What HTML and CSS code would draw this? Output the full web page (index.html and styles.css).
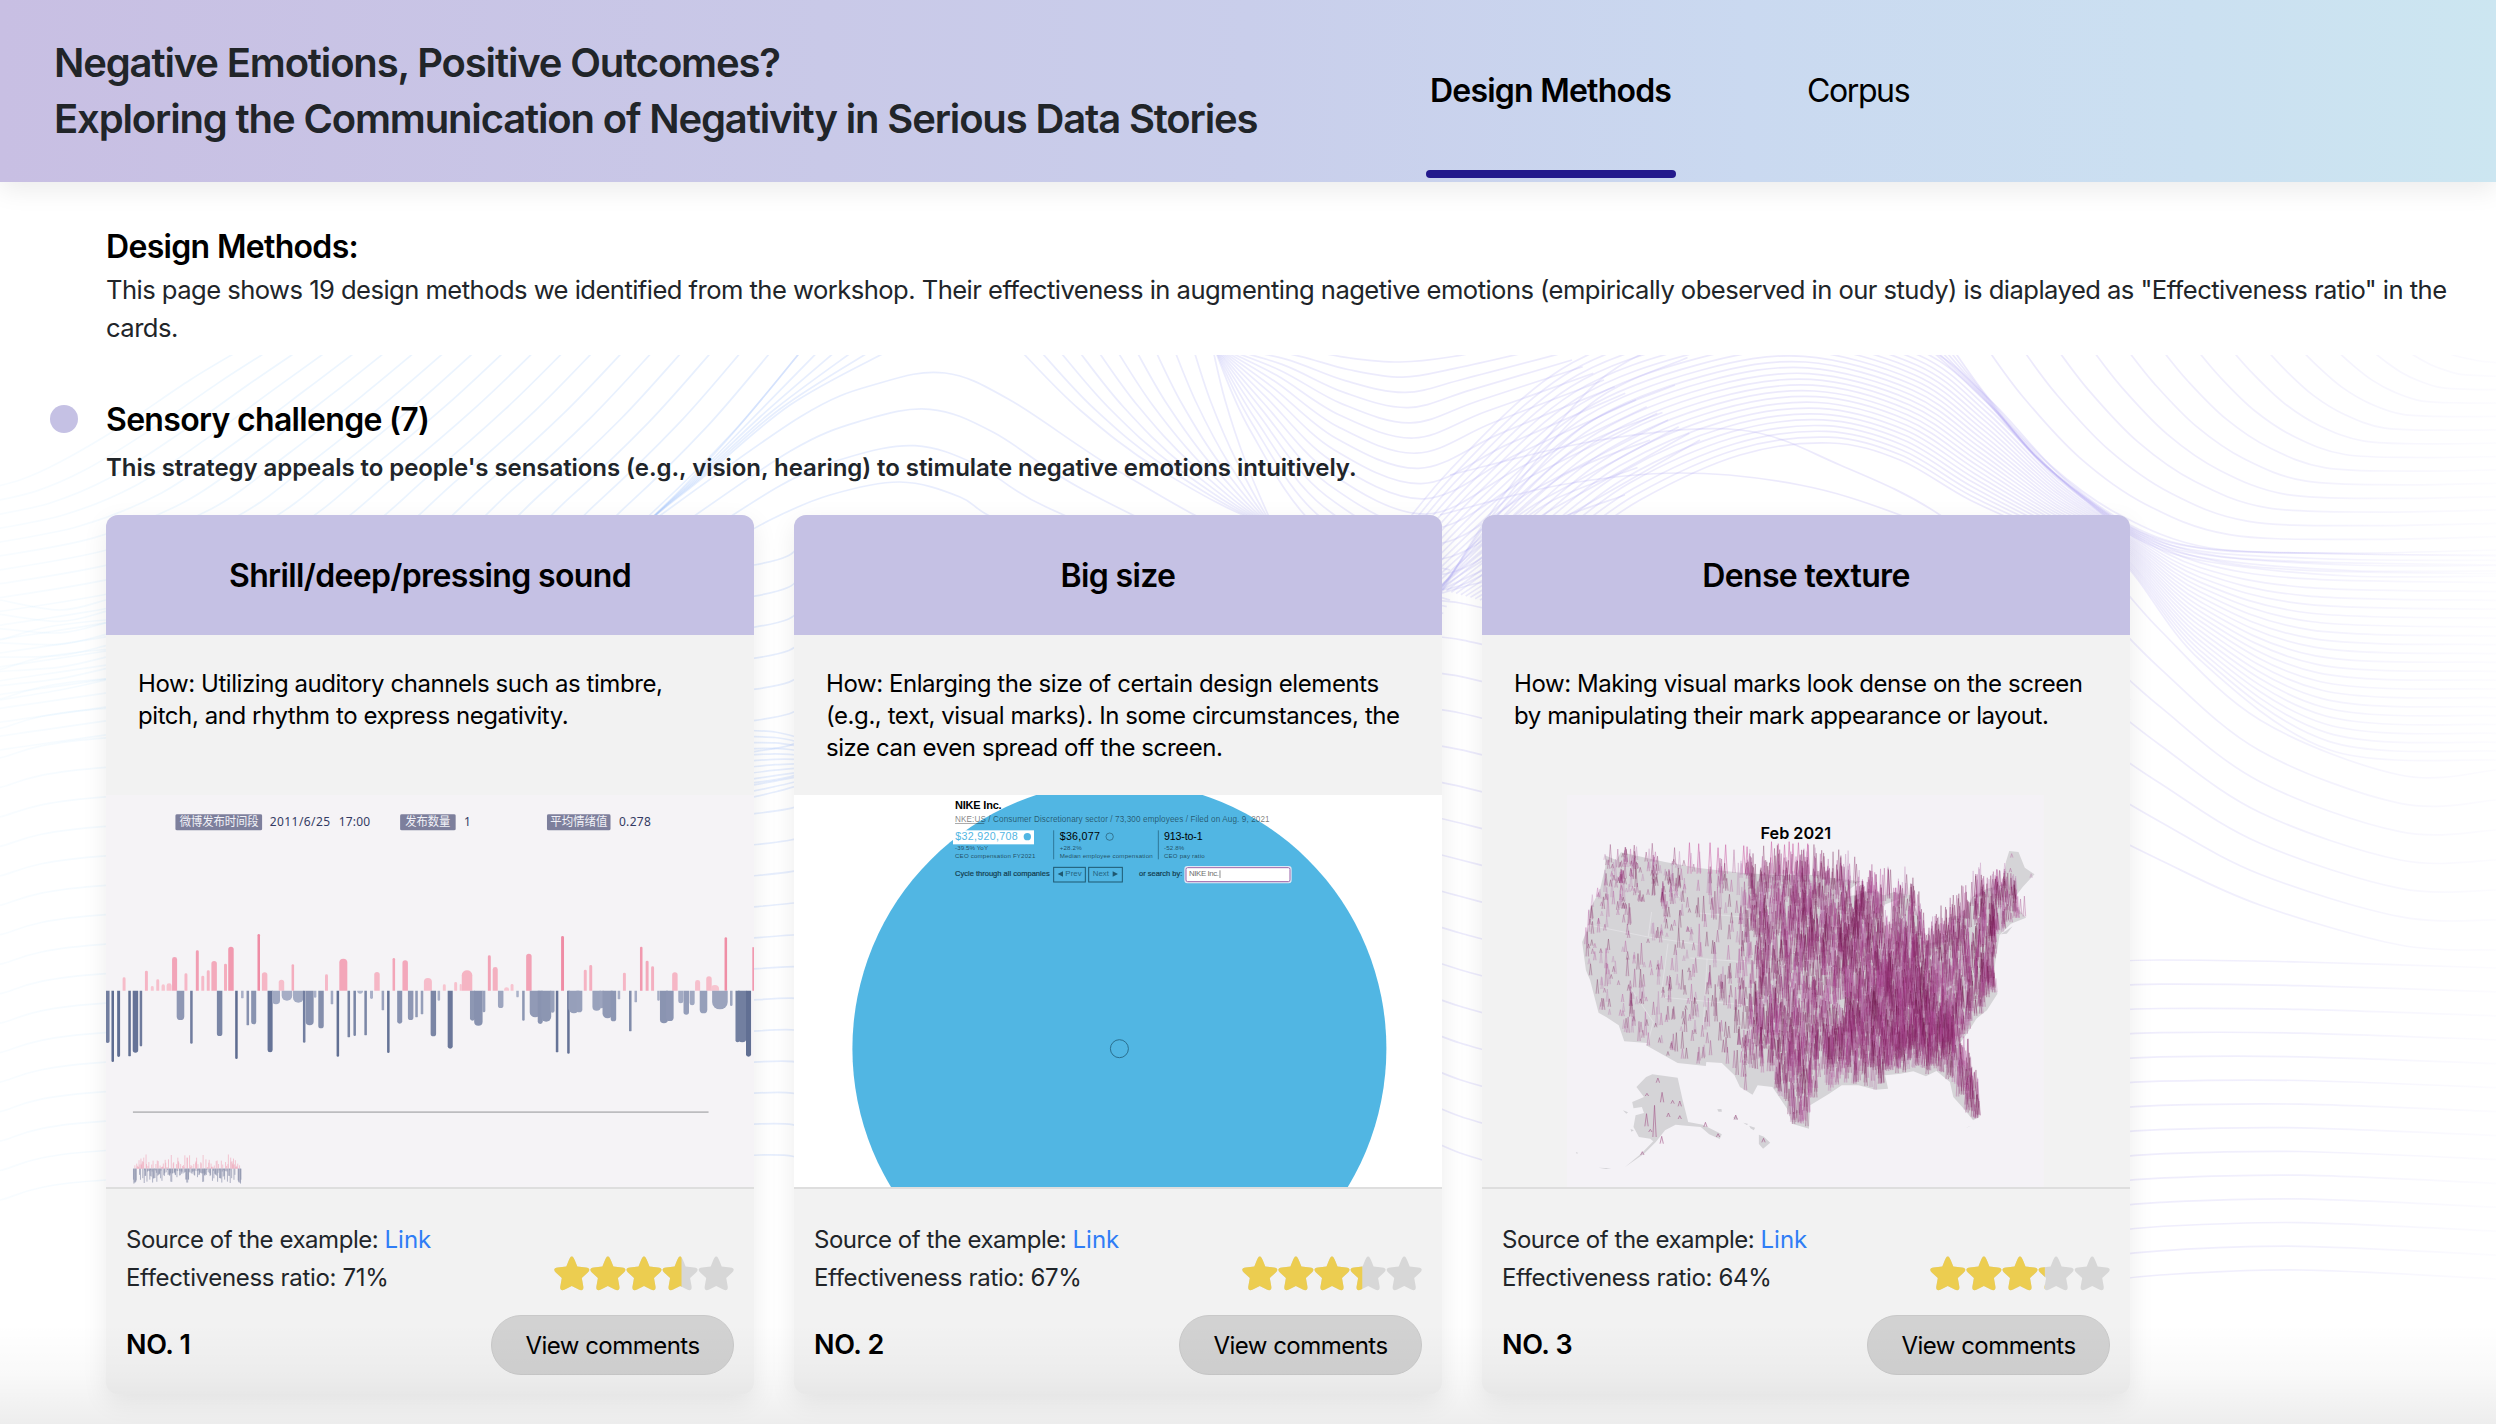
FILE: index.html
```html
<!DOCTYPE html>
<html lang="en">
<head>
<meta charset="utf-8">
<title>Negative Emotions, Positive Outcomes?</title>
<link rel="stylesheet" href="styles.css">
</head>
<body>
<svg class="waves" viewBox="0 355 2496 1069" aria-hidden="true">
  <defs>
    <linearGradient id="waveInk" gradientUnits="userSpaceOnUse" x1="0" y1="0" x2="2496" y2="0">
      <stop offset="0" stop-color="#aadcfc" stop-opacity=".08"/>
      <stop offset=".1" stop-color="#a8d4fc" stop-opacity=".2"/>
      <stop offset=".3" stop-color="#a4c2fa" stop-opacity=".27"/>
      <stop offset=".5" stop-color="#b0aef4" stop-opacity=".24"/>
      <stop offset=".8" stop-color="#a99cf0" stop-opacity=".22"/>
      <stop offset=".92" stop-color="#b0a8f2" stop-opacity=".17"/>
      <stop offset="1" stop-color="#b8b0f4" stop-opacity=".04"/>
    </linearGradient>
  </defs>
  <g id="waves" fill="none" stroke="url(#waveInk)" stroke-width="1.7"></g>
</svg>

<header class="topbar">
  <h1 class="topbar-title">Negative Emotions, Positive Outcomes?<br>Exploring the Communication of Negativity in Serious Data Stories</h1>
  <nav class="tabs">
    <a class="tab tab-active">Design Methods</a>
    <a class="tab">Corpus</a>
  </nav>
</header>

<main class="content">
  <section class="intro">
    <h2 class="heading">Design Methods:</h2>
    <p class="intro-text">This page shows 19 design methods we identified from the workshop. Their effectiveness in augmenting nagetive emotions (empirically obeserved in our study) is diaplayed as "Effectiveness ratio" in the cards.</p>
  </section>

  <section class="strategy">
    <div class="strategy-head"><i class="dot"></i><h2 class="heading">Sensory challenge (7)</h2></div>
    <p class="strategy-text">This strategy appeals to people's sensations (e.g., vision, hearing) to stimulate negative emotions intuitively.</p>

    <div class="cards">
      <article class="card">
        <h3 class="card-title">Shrill/deep/pressing sound</h3>
        <p class="how">How: Utilizing auditory channels such as timbre,<br>pitch, and rhythm to express negativity.</p>
        <svg class="picture" viewBox="14 44 1540 1176" preserveAspectRatio="none">
          <rect x="14" y="44" width="1540" height="1176" fill="#f5f3f6"/>
          <g fill="#7d7f9c"><rect x="179" y="102" width="206" height="48" rx="4"/><rect x="713" y="102" width="132" height="48" rx="4"/><rect x="1062" y="102" width="151" height="48" rx="4"/></g>
          <g class="cjk" fill="#f2f2f8">
            <text transform="translate(189 136) scale(2.376 3)" textLength="79" lengthAdjust="spacingAndGlyphs">微博发布时间段</text>
            <text transform="translate(725 136) scale(2.376 3)" textLength="45" lengthAdjust="spacingAndGlyphs">发布数量</text>
            <text transform="translate(1070 136) scale(2.376 3)" textLength="57" lengthAdjust="spacingAndGlyphs">平均情绪值</text>
          </g>
          <g class="figures" fill="#333a63">
            <text transform="translate(403 136) scale(2.376 3)" textLength="60.5">2011/6/25</text>
            <text transform="translate(567 136) scale(2.376 3)" textLength="31.5">17:00</text>
            <text transform="translate(865 136) scale(2.376 3)">1</text>
            <text transform="translate(1233 136) scale(2.376 3)" textLength="32">0.278</text>
          </g>
          <g id="bars"></g>
          <path d="M78 995.5H1446" stroke="#bcbcbf" stroke-width="5"/>
          <g id="miniBars"></g>
        </svg>
        <div class="card-foot">
          <div class="facts">
            <p><span class="source">Source of the example: </span><a class="link">Link</a><br><span class="ratio">Effectiveness ratio: 71%</span></p>
            <div class="stars" data-score="71"></div>
          </div>
          <div class="actions"><strong class="rank">NO. 1</strong><button class="comments">View comments</button></div>
        </div>
      </article>

      <article class="card">
        <h3 class="card-title">Big size</h3>
        <p class="how">How: Enlarging the size of certain design elements<br>(e.g., text, visual marks). In some circumstances, the<br>size can even spread off the screen.</p>
        <svg class="picture" viewBox="0 0 648 392">
          <rect width="648" height="392" fill="#fff"/>
          <circle cx="325.4" cy="253.7" r="267" fill="#51b6e3"/>
          <circle cx="325.4" cy="253.7" r="9" fill="none" stroke="#2a6f8f" stroke-width="1"/>
          <g class="nike" transform="translate(136 -5) scale(.33333)">
            <text x="75" y="57" font-size="33" font-weight="700" textLength="140">NIKE Inc.</text>
            <g font-size="24.5" fill="#000" fill-opacity=".52"><text x="75" y="96" textLength="944">NKE:US / Consumer Discretionary sector / 73,300 employees / Filed on Aug. 9, 2021</text></g>
            <path d="M75 100.500H163" stroke="#000" stroke-opacity=".5" stroke-width="2"/>
            <rect x="69" y="121" width="243" height="42" fill="#fff"/>
            <text x="76" y="150" font-size="32" fill="#51b6e3" textLength="187">$32,920,708</text>
            <circle cx="292" cy="140" r="11" fill="#51b6e3"/>
            <text x="389" y="150" font-size="32" textLength="121">$36,077</text>
            <circle cx="539" cy="140" r="11" fill="none" stroke="#24566c" stroke-width="2"/>
            <text x="702" y="150" font-size="32" textLength="116">913-to-1</text>
            <path d="M371 121V208M685 121V208" stroke="#286a89" stroke-width="2.500"/>
            <g font-size="18.500" fill="#000" fill-opacity=".6">
              <text x="75" y="179" textLength="99">-39.5% YoY</text><text x="389" y="179" textLength="66">+28.2%</text><text x="702" y="179" textLength="61">-52.8%</text>
              <text x="75" y="203" textLength="241">CEO compensation FY2021</text><text x="389" y="203" textLength="279">Median employee compensation</text><text x="702" y="203" textLength="122">CEO pay ratio</text>
            </g>
            <g font-size="23.500" fill="#123c4e" stroke="#123c4e" stroke-width=".6">
              <text x="75" y="259" textLength="284" lengthAdjust="spacingAndGlyphs">Cycle through all companies</text><text x="627" y="259" textLength="130" lengthAdjust="spacingAndGlyphs">or search by:</text>
            </g>
            <g fill="none" stroke="#1f5870" stroke-width="3"><rect x="371" y="232" width="95" height="44"/><rect x="476" y="232" width="101" height="44"/></g>
            <path d="M399 244V260L383 252ZM548 244V260L564 252Z" fill="#1f5870"/>
            <g font-size="23.500" fill="#26657f"><text x="406" y="259" textLength="49">Prev</text><text x="488" y="259" textLength="49">Next</text></g>
            <rect x="765" y="230" width="318" height="48" rx="7" fill="#fff" stroke="#dfe6f4" stroke-width="4"/>
            <rect x="768" y="233" width="312" height="42" rx="5" fill="#fff" stroke="#9a62a8" stroke-width="3"/>
            <text x="777" y="259" font-size="23.500" fill="#6e6e6e" textLength="90">NIKE Inc.</text>
            <path d="M870 241V264" stroke="#555" stroke-width="2"/>
          </g>
        </svg>
        <div class="card-foot">
          <div class="facts">
            <p><span class="source">Source of the example: </span><a class="link">Link</a><br><span class="ratio">Effectiveness ratio: 67%</span></p>
            <div class="stars" data-score="67"></div>
          </div>
          <div class="actions"><strong class="rank">NO. 2</strong><button class="comments">View comments</button></div>
        </div>
      </article>

      <article class="card">
        <h3 class="card-title">Dense texture</h3>
        <p class="how">How: Making visual marks look dense on the screen<br>by manipulating their mark appearance or layout.</p>
        <svg class="picture" viewBox="5 44 1540 1176" preserveAspectRatio="none">
          <rect x="207" y="44" width="1133" height="1176" fill="#f4f2f6"/>
          <g id="map"></g>
          <text class="month" transform="translate(667 175) scale(2.376 3)" textLength="70.500" lengthAdjust="spacingAndGlyphs">Feb 2021</text>
        </svg>
        <div class="card-foot">
          <div class="facts">
            <p><span class="source">Source of the example: </span><a class="link">Link</a><br><span class="ratio">Effectiveness ratio: 64%</span></p>
            <div class="stars" data-score="64"></div>
          </div>
          <div class="actions"><strong class="rank">NO. 3</strong><button class="comments">View comments</button></div>
        </div>
      </article>
    </div>
  </section>
</main>
<div class="bottom-fade"></div>
<script src="script.js"></script>
</body>
</html>
```
FILE: styles.css
```css
* { box-sizing: border-box; margin: 0; padding: 0; }
body {
  position: relative;
  width: 2496px;
  height: 1424px;
  overflow: hidden;
  background: #fff;
  color: #212529;
  font-family: Inter, "Liberation Sans", sans-serif;
}
.waves { position: absolute; left: 0; top: 355px; width: 2496px; height: 1069px; z-index: -1; }

.topbar {
  display: flex;
  height: 182px;
  padding-left: 54px;
  background: linear-gradient(90deg, #c8bfe3 0%, #c9c9e8 33%, #c9ceeb 50%, #cad9f0 70%, #cbe0f1 88%, #cce6f1 100%);
  box-shadow: 0 8px 24px rgba(0, 0, 0, .08);
}
.topbar-title { width: 1372px; padding-top: 35px; font-size: 40px; line-height: 56px; font-weight: 600; letter-spacing: -1.15px; white-space: nowrap; }
.tabs { display: flex; gap: 127px; }
.tab { display: flex; flex-direction: column; padding: 67px 5px 4px 4px; color: #000; font-size: 32px; line-height: 48px; letter-spacing: -1.4px; white-space: nowrap; }
.tab-active { width: 250px; font-weight: 600; letter-spacing: -.78px; }
.tab-active::after { content: ""; height: 8px; margin: auto -5px 0 -4px; border-radius: 4px; background: #23198c; }

.content { padding: 42px 40px 0 106px; }
.heading { color: #000; font-size: 32px; line-height: 48px; font-weight: 600; letter-spacing: -.68px; }
.intro .heading { line-height: 46px; }
.intro-text { width: 2350px; margin-top: 1px; font-size: 25.6px; line-height: 38.4px; letter-spacing: -.545px; }
.strategy { margin-top: 47px; }
.strategy-head { position: relative; height: 48px; padding-top: 1px; }
.dot { position: absolute; left: -56px; top: 10px; width: 28px; height: 28px; border-radius: 50%; background: #c5c1e4; }
.strategy-text { margin-top: 7px; font-size: 24px; line-height: 36px; font-weight: 600; letter-spacing: -.06px; }

.cards { display: flex; gap: 40px; margin-top: 29px; }
.card { width: 648px; height: 879px; border-radius: 12px; overflow: hidden; background: #f2f2f2; box-shadow: 0 8px 26px rgba(0, 0, 0, .08); }
.card-title { display: flex; align-items: center; justify-content: center; height: 120px; padding-top: 2px; background: #c5c1e4; color: #000; font-size: 32px; font-weight: 600; letter-spacing: -.65px; }
.how { height: 160px; padding: 33px 0 0 32px; color: #000; font-size: 24px; line-height: 32px; letter-spacing: -.43px; white-space: nowrap; }
.picture { display: block; width: 648px; height: 392px; }
.card-foot { padding: 32px 20px 18px; border-top: 2px solid #dedede; }
.facts { display: flex; justify-content: space-between; align-items: flex-end; font-size: 24px; line-height: 38px; }
.source { letter-spacing: -.46px; }
.ratio { letter-spacing: -.33px; }
.link { color: #2f7df6; }
.stars { width: 181px; height: 36px; margin-bottom: 6px; }
.stars svg { display: block; }
.actions { display: flex; justify-content: space-between; align-items: center; margin-top: 18px; }
.rank { color: #000; font-size: 27px; font-weight: 600; letter-spacing: -.35px; }
.comments { width: 243px; height: 60px; padding-top: 2px; border: 1px solid #c9c9c9; border-radius: 30px; background: #d2d2d2; color: #000; font: 24px Inter, sans-serif; letter-spacing: -.52px; white-space: nowrap; }

.cjk { font: 12.5px "Noto Sans CJK SC", sans-serif; }
.figures { font: 12px "Noto Sans", sans-serif; }
.nike { font-family: "Liberation Sans", sans-serif; }
.month { font: 600 16.5px Inter, sans-serif; }
.bottom-fade { position: absolute; left: 0; bottom: 0; width: 2496px; height: 100px; background: linear-gradient(rgba(0, 0, 0, 0), rgba(0, 0, 0, .025) 50%, rgba(0, 0, 0, .07)); }
```
FILE: script.js
```js
const byId = id => document.getElementById(id);

/* Smooth path through a list of points */
function smooth(p) {
  let d = `M${p[0][0]} ${p[0][1].toFixed(1)}`;
  for (let i = 0; i < p.length - 1; i++) {
    const a = p[i - 1] || p[i], b = p[i], c = p[i + 1], e = p[i + 2] || c;
    d += `C${(b[0] + (c[0] - a[0]) / 6).toFixed(1)} ${(b[1] + (c[1] - a[1]) / 6).toFixed(1)} ${(c[0] - (e[0] - b[0]) / 6).toFixed(1)} ${(c[1] - (e[1] - b[1]) / 6).toFixed(1)} ${c[0].toFixed(1)} ${c[1].toFixed(1)}`;
  }
  return d;
}

/* Each family blends n lines between two guide curves */
function family(a, b, n, ease = 1) {
  let s = '';
  for (let i = 0; i < n; i++) {
    const t = Math.pow(i / (n - 1), ease);
    s += `<path d="${smooth(a.map((p, k) => [p[0] + (b[k][0] - p[0]) * t, p[1] + (b[k][1] - p[1]) * t]))}"/>`;
  }
  return s;
}
byId('waves').innerHTML =
  family([[802, 350], [735, 430], [655, 510], [540, 610], [300, 700], [0, 750]], [[240, 350], [190, 380], [120, 427], [60, 462], [20, 480], [-20, 490]], 20) +
  family([[890, 350], [790, 405], [700, 480], [650, 520], [560, 600]], [[802, 350], [740, 425], [690, 480], [650, 520], [560, 610]], 6) +
  family([[640, 530], [800, 417], [880, 383], [945, 373], [1010, 400], [1120, 472], [1250, 540], [1450, 600]], [[700, 560], [770, 520], [830, 495], [900, 482], [960, 497], [1010, 525], [1200, 590], [1440, 620]], 4) +
  family([[1020, 350], [1080, 410], [1160, 470], [1280, 530], [1450, 570]], [[1213, 350], [1225, 400], [1245, 460], [1275, 530], [1300, 580]], 11) +
  family([[1215, 345], [1290, 348], [1350, 358], [1400, 362], [1450, 357], [1540, 340]], [[1213, 345], [1250, 430], [1320, 530], [1440, 590], [1560, 520], [1700, 440]], 16) +
  family([[1370, 570], [1450, 470], [1560, 370], [1680, 325], [1790, 310], [1920, 345], [1990, 400], [2060, 475], [2130, 525], [2200, 548], [2300, 553], [2496, 556]], [[1480, 600], [1560, 555], [1640, 500], [1740, 455], [1830, 443], [1900, 460], [1970, 500], [2050, 535], [2120, 560], [2200, 660], [2330, 750], [2496, 760]], 24) +
  family([[1440, 595], [1500, 500], [1600, 380], [1700, 330]], [[1420, 600], [1470, 585], [1520, 575], [1600, 550]], 9) +
  family([[1450, 475], [1600, 440], [1740, 430], [1840, 465], [1940, 515], [2040, 600], [2130, 700]], [[1440, 515], [1560, 485], [1680, 473], [1800, 485], [1900, 515], [2000, 560], [2100, 640]], 2) +
  family([[1950, 345], [1990, 400], [2050, 465], [2120, 515], [2210, 548], [2350, 553], [2496, 550]], [[2440, 350], [2450, 354], [2460, 357], [2470, 359], [2480, 361], [2490, 362], [2500, 363]], 15) +
  family([[1945, 345], [1985, 395], [2035, 455], [2085, 497], [2140, 532], [2210, 549], [2350, 554], [2496, 555]], [[1925, 345], [1980, 395], [2035, 456], [2085, 500], [2140, 540], [2210, 562], [2350, 576], [2496, 576]], 5) +
  family([[2100, 560], [2160, 630], [2260, 720], [2400, 775], [2496, 770]], [[2080, 820], [2160, 860], [2260, 905], [2400, 945], [2496, 950]], 7) +
  family([[0, 640], [106, 620], [500, 600], [754, 565], [800, 545]], [[0, 1200], [106, 1180], [500, 1170], [760, 1155], [800, 1162]], 20) +
  family([[0, 600], [60, 610], [106, 600]], [[0, 700], [60, 690], [106, 680]], 8) +
  family([[740, 730], [775, 732], [800, 738]], [[740, 800], [775, 792], [800, 785]], 12) +
  family([[1430, 600], [1460, 603], [1500, 612]], [[1430, 1140], [1460, 1153], [1500, 1165]], 16) +
  family([[2100, 962], [2160, 960], [2300, 962], [2496, 968]], [[2100, 1282], [2160, 1275], [2300, 1270], [2496, 1279]], 14);

/* Sound bars: centre, width, end */
const up = [[57,7,591],[110,7,571],[124,7,617],[137,7,597],[150,8,612],[164,12,609],[177,12,530],[204,7,579],[231,7,510],[244,7,586],[257,7,570],[271,13,542],[298,7,550],[311,13,499],[377,6,461],[391,13,576],[431,13,598],[458,6,552],[538,7,582],[578,19,535],[658,13,575],[698,6,533],[725,13,540],[779,19,593],[818,7,612],[845,7,605],[857,5,611],[872,25,570],[925,7,525],[939,12,560],[966,12,621],[979,7,611],[1019,13,520],[1099,7,467],[1153,7,568],[1166,7,554],[1246,7,577],[1286,6,499],[1300,7,541],[1313,7,558],[1366,13,576],[1420,12,599],[1447,13,588],[1461,20,614],[1487,6,471],[1552,4,500]];
const down = [[18,9,788],[30,6,845],[44,7,830],[70,6,828],[84,13,817],[97,6,798],[191,18,719],[217,6,790],[284,13,767],[324,6,836],[338,6,654],[351,6,735],[365,12,732],[404,12,816],[418,19,672],[444,25,661],[471,25,667],[485,6,787],[498,19,735],[511,6,652],[525,13,744],[551,6,672],[565,6,829],[591,6,771],[605,6,767],[618,14,640],[631,6,765],[645,7,656],[672,6,690],[685,6,818],[712,12,730],[738,13,719],[752,6,711],[765,6,702],[792,13,768],[805,6,661],[832,12,805],[885,12,721],[899,20,736],[912,7,696],[952,13,683],[992,6,651],[1006,6,721],[1034,26,711],[1046,12,731],[1060,24,724],[1075,10,697],[1086,6,816],[1113,6,820],[1126,26,699],[1139,14,696],[1180,20,691],[1192,10,684],[1206,24,714],[1220,13,723],[1233,6,657],[1260,6,753],[1273,6,666],[1327,6,661],[1340,19,729],[1354,18,722],[1380,12,669],[1393,13,703],[1407,12,675],[1434,18,699],[1473,37,687],[1500,6,677],[1515,10,786],[1526,20,786],[1541,12,829]];
const mix = (a, b, t) => `rgb(${a.map((v, i) => Math.round(v + (b[i] - v) * Math.min(1, t)))})`;
function bar([x, w, end]) {
  const len = Math.abs(end - 631), dir = Math.sign(end - 631), r = w / 2, ry = Math.min(r * 1.2, len);
  const fill = dir < 0 ? mix([248, 203, 213], [239, 140, 165], len / 165) : mix([178, 184, 206], [94, 108, 145], len / 205);
  return `<path fill="${fill}" d="M${x - r} 631V${end - dir * ry}A${r} ${ry} 0 0 ${dir < 0 ? 1 : 0} ${x + r} ${end - dir * ry}V631Z"/>`;
}
byId('bars').innerHTML = [...up, ...down].map(bar).join('');
let mini = '';
for (let k = 0; k < 2; k++) {
  for (const [x, , e] of [...up, ...down]) {
    const px = 79 + k * 128 + (k ? 1554 - x : x - 14) * 128 / 1540;
    const len = (e - 631) * (e < 631 ? .25 : .21);
    mini += `<path d="M${px.toFixed(1)} 1165v${len.toFixed(1)}" stroke="${e < 631 ? '#f0a9bb' : '#858ba8'}" stroke-width="1.7"/>`;
  }
}
byId('miniBars').innerHTML = mini;

const usa = [[297,225],[325,240],[335,216],[440,245],[520,263],[620,277],[700,284],[805,284],[808,268],[815,290],[860,297],[905,303],[875,330],[870,350],[905,340],[930,330],[960,345],[985,335],[1025,345],[1040,400],[1050,430],[1048,470],[1060,490],[1085,485],[1120,440],[1115,410],[1150,405],[1170,350],[1205,325],[1245,312],[1250,245],[1258,212],[1280,215],[1295,262],[1318,282],[1290,320],[1275,345],[1275,380],[1298,412],[1262,430],[1235,465],[1225,545],[1220,600],[1230,640],[1205,690],[1180,715],[1160,755],[1140,790],[1137,830],[1155,860],[1175,905],[1187,970],[1187,1010],[1172,1020],[1150,985],[1125,950],[1117,905],[1085,872],[1060,888],[1030,873],[1000,880],[963,885],[970,925],[940,928],[900,915],[860,915],[830,940],[785,975],[782,1045],[742,1030],[730,985],[695,920],[660,915],[648,943],[618,920],[605,885],[575,848],[538,845],[537,857],[470,848],[395,795],[398,788],[343,783],[330,735],[300,710],[282,697],[262,600],[252,570],[243,485],[258,440],[258,395],[285,330],[298,260]];
const lake = [[958,375],[998,355],[980,380],[978,445],[985,470],[968,480],[955,440]];
const alaska = [[410,882],[470,892],[482,960],[495,1025],[530,1033],[575,1062],[570,1076],[545,1062],[525,1040],[490,1036],[465,1033],[440,1050],[418,1085],[390,1120],[345,1160],[385,1118],[412,1083],[405,1075],[378,1070],[365,1040],[370,1005],[390,998],[385,980],[365,984],[362,965],[390,950],[372,920],[395,890]];
const poly = (p, f) => `<polygon points="${p.join(' ')}" fill="${f}"/>`;
function inside(x, y, p) {
  let c = false;
  for (let i = 0, j = p.length - 1; i < p.length; j = i++)
    if ((p[i][1] > y) !== (p[j][1] > y) && x < (p[j][0] - p[i][0]) * (y - p[i][1]) / (p[j][1] - p[i][1]) + p[i][0]) c = !c;
  return c;
}
let seed = 7;
const rnd = () => (seed = (seed * 16807) % 2147483647) / 2147483647;
const spots = [[1085,780,42,1.5],[1000,640,65,.9],[1228,465,16,1.8],[1200,605,16,1.3],[870,500,60,.6],[930,800,70,.7],[1140,560,60,.15],[700,770,45,.4],[1030,640,40,.6],[970,860,50,.3]];
/* Spikes are dealt into layers so that overlapping ones build up in tone */
const layers = Array.from({ length: 30 }, () => '');
for (let i = 0; i < 20000; i++) {
  const x = 240 + rnd() * 1080, y = 210 + rnd() * 840;
  if (!inside(x, y, usa) || inside(x, y, lake)) continue;
  let d = x < 610 ? .075 : x < 690 ? .12 + (x - 610) / 330 : .36;
  if (x < 350) d += .03;
  if (x < 500 && y < 380) d += .09;
  if (y > 880 && x < 700) d = .06;
  if (x > 1250 && y < 315) d = .04;
  if (y > 860 && x > 800 && x < 1110) d *= .5;
  if (x > 690 && x < 860 && y > 560 && y < 720) d *= .75;
  for (const [a, b, s, w] of spots) d += w * .5 * Math.exp(-((x - a) ** 2 + (y - b) ** 2) / (2 * s * s));
  if (rnd() > d) continue;
  let h = x < 640 ? 12 + rnd() * rnd() * 75 : 35 + rnd() * 65;
  if (x < 640 && x > 520) h += 20;
  if (x > 1250 && y < 315) h = 20;
  if (x > 1140 && y < 340) h *= .6;
  if (x > 1225 && y >= 340) h *= .8;
  layers[Math.floor(rnd() * 30)] += `M${(x - 3.2).toFixed(1)} ${y.toFixed(1)}l3.2 ${(-h).toFixed(1)}l3.2 ${h.toFixed(1)}`;
}
let north = '';
for (const x of [498,520,547,566,584,627,635,693,709,724,735,744,757,779]) north += `M${x - 4} 280L${x} ${184 + (x % 7) * 3}L${x + 4} 280`;
const islands = '<path d="M663 1063l12 6 15 18-17 18-10-14ZM564 987l10-1 1 8-8 0ZM602 1012l6-6 6 10-6 3ZM626 1027l12 4-4 3ZM640 1036l14 6-3 8-8-6ZM340 990l12 6-4 4ZM358 1046l8 4-6 4ZM1155 1042l12-6-6 4ZM1238 462l28-24-14 22ZM255 1145l8 4M282 1162l30 2-12 2ZM228 1115l6 3-4 2Z" fill="#d3d2d6"/>';
const small = [[423,907,14],[397,947,8],[433,966,30],[458,970,10],[475,978,16],[396,1038,38],[415,1070,95],[448,1010,12],[475,1016,10],[405,1055,8],[432,1090,22],[386,1124,10],[608,1018,14],[674,1086,12],[536,1040,14],[566,1070,10]];
const tones = ['#b04a97', '#7a1a55', '#98387c', '#ba84b4', '#6c1648'];
byId('map').innerHTML = poly(usa, '#d5d4d7') + poly(lake, '#f4f2f6') + poly(alaska, '#d5d4d7') + islands +
  '<path d="M256 433L400 470L520 492M400 470L408 395M446 305L475 350M447 490L430 650L530 662L680 680M540 535L530 760M500 533L640 545M520 398L660 414M362 630L412 725L400 785" fill="none" stroke="#e4e3e7" stroke-width="2"/>' +
  `<g fill="#c43a95" fill-opacity=".05" stroke-linejoin="round"><path d="${north}" stroke="#cf6fae" stroke-width="1.6"/><path d="${small.map(([x, y, h]) => `M${x - 4} ${y}l4 ${-h}l4 ${h}`).join('')}" stroke="#a35c8b" stroke-width="1.6"/></g>` +
  layers.map((d, i) => `<path d="${d}" fill="#a83a86" fill-opacity=".1" stroke="${tones[i % 5]}" stroke-opacity=".5" stroke-width="1.5"/>`).join('');

/* Star ratings, filled from the left by score */
const star = 'M18 1.500C19.500 1.500 20.300 3.500 21.500 6.500L23.500 11.500L32 12.500C36 13 36.500 15 34 17.500L28 23L29.500 31.500C30 35 28 36 25 34.500L18 31L11 34.500C8 36 6 35 6.500 31.500L8 23L2 17.500C-.5 15 0 13 4 12.500L12.500 11.500L14.500 6.500C15.700 3.500 16.500 1.500 18 1.500Z';
document.querySelectorAll('.stars').forEach((el, n) => {
  const row = [0, 1, 2, 3, 4].map(i => `<path transform="translate(${.8 + i * 36.1} 0)" d="${star}"/>`).join('');
  el.innerHTML = `<svg width="181" height="36" viewBox="0 0 181 36"><clipPath id="score${n}"><rect width="${1.81 * el.dataset.score}" height="36"/></clipPath><g fill="#d7d7d7">${row}</g><g fill="#eccd50" clip-path="url(#score${n})">${row}</g></svg>`;
});
```
